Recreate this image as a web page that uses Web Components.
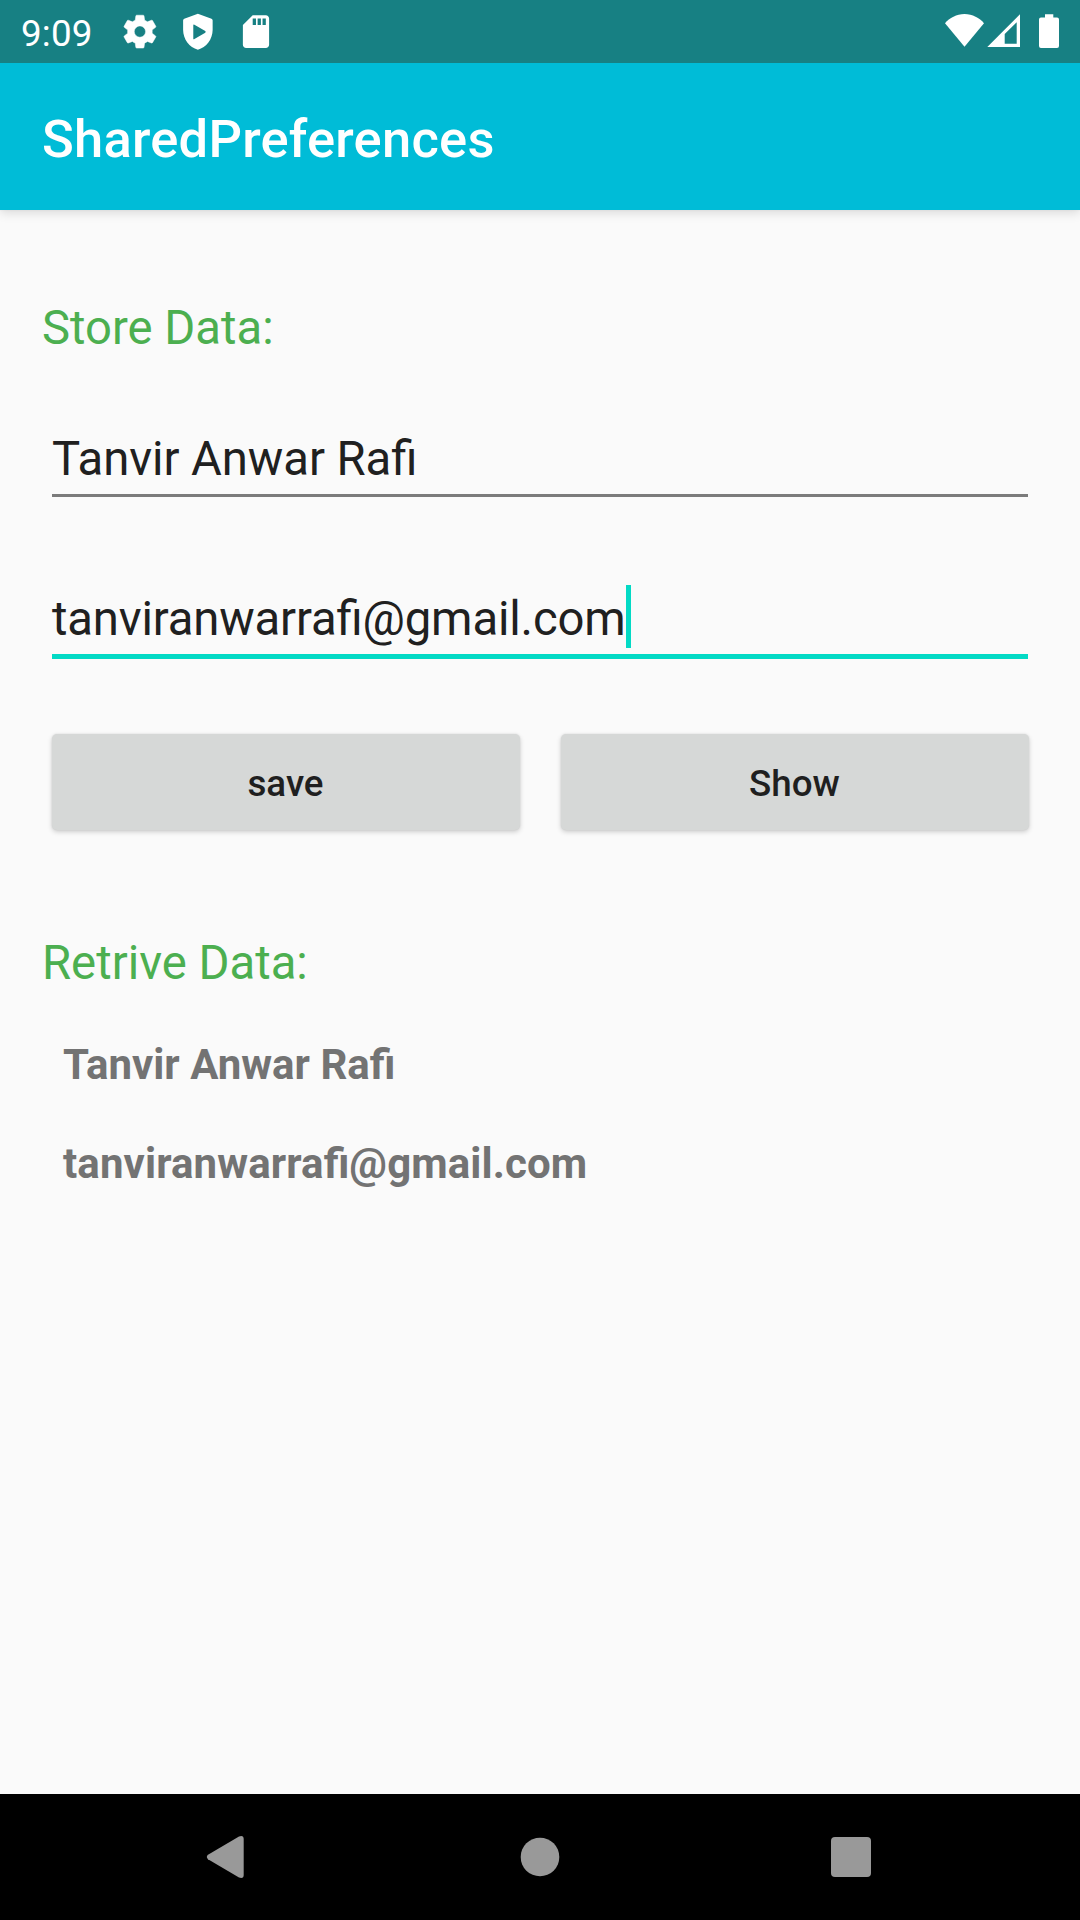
<!DOCTYPE html>
<html lang="en">
<head>
<meta charset="utf-8">
<title>SharedPreferences</title>
<style>
  html, body { margin: 0; padding: 0; }
  body { width: 1080px; height: 1920px; overflow: hidden; font-family: Roboto, sans-serif; background: #fafafa; }
</style>
</head>
<body>
<phone-screen>
  <status-bar slot="status">9:09</status-bar>
  <app-bar slot="bar">SharedPreferences</app-bar>
  <section-label style="margin-top:86px">Store Data:</section-label>
  <edit-text style="margin-top:67px;letter-spacing:-.06px">Tanvir Anwar Rafi</edit-text>
  <edit-text focused style="margin-top:90px;letter-spacing:-.16px">tanviranwarrafi@gmail.com</edit-text>
  <button-row style="margin-top:75px">
    <raised-button>save</raised-button>
    <raised-button>Show</raised-button>
  </button-row>
  <section-label style="margin-top:101px">Retrive Data:</section-label>
  <stored-value style="margin-top:45px">Tanvir Anwar Rafi</stored-value>
  <stored-value style="margin-top:50px;letter-spacing:.11px">tanviranwarrafi@gmail.com</stored-value>
  <nav-bar slot="nav"></nav-bar>
</phone-screen>
<script>
const define = (name, html) => customElements.define(name, class extends HTMLElement {
  constructor() {
    super();
    this.attachShadow({ mode: 'open' }).innerHTML = html;
  }
});

define('phone-screen', `
<style>
  :host { display: flex; flex-direction: column; width: 1080px; height: 1920px; background: #fafafa; }
  main { flex: 1; display: flex; flex-direction: column; min-height: 0; }
</style>
<slot name="status"></slot><slot name="bar"></slot><main><slot></slot></main><slot name="nav"></slot>`);

define('status-bar', `
<style>
  :host { display: flex; align-items: flex-start; height: 63px; z-index: 1; background: #178083; color: #fff; box-sizing: border-box; padding: 0 16px 0 21px; }
  .time { font-size: 36.75px; line-height: 43px; padding-top: 12px; width: 98px; letter-spacing: .2px; white-space: nowrap; }
  svg { display: block; fill: #fff; }
  .left { display: flex; flex: 1; }
</style>
<div class="time"><slot></slot></div>
<div class="left">
  <svg width="180" height="63" viewBox="0 0 180 63">
    <g transform="translate(.4 11.1) scale(1.71)"><path d="M19.14 12.94c.04-.3.06-.61.06-.94 0-.32-.02-.64-.07-.94l2.03-1.58c.18-.14.23-.41.12-.61l-1.92-3.32c-.12-.22-.37-.29-.59-.22l-2.39.96c-.5-.38-1.03-.7-1.62-.94l-.36-2.54c-.04-.24-.24-.41-.48-.41h-3.84c-.24 0-.43.17-.47.41l-.36 2.54c-.59.24-1.13.57-1.62.94l-2.39-.96c-.22-.08-.47 0-.59.22L2.74 8.87c-.12.21-.08.47.12.61l2.03 1.58c-.05.3-.09.63-.09.94s.02.64.07.94l-2.03 1.58c-.18.14-.23.41-.12.61l1.92 3.32c.12.22.37.29.59.22l2.39-.96c.5.38 1.03.7 1.62.94l.36 2.54c.05.24.24.41.48.41h3.84c.24 0 .44-.17.47-.41l.36-2.54c.59-.24 1.13-.56 1.62-.94l2.39.96c.22.08.47 0 .59-.22l1.92-3.32c.12-.22.07-.47-.12-.61l-2.01-1.58zM12 15.3c-1.820 0-3.300-1.480-3.300-3.300s1.480-3.300 3.300-3.300 3.300 1.480 3.300 3.300-1.480 3.300-3.300 3.300z" stroke="#fff" stroke-width=".3"/></g>
    <g transform="translate(59.2 12) scale(1.64)"><path fill-rule="evenodd" d="M12 1 3.7 4.1Q3 4.4 3 5.1V11c0 5.55 3.84 10.74 9 12 5.16-1.26 9-6.45 9-12V5.1Q21 4.4 20.3 4.1zM9.2 8.1v8q0 .8.7.4l6.600-3.900q.5-.5 0-1L9.900 7.800q-.7-.5-.7.3z"/></g>
    <g transform="translate(117.300 12) scale(1.64)"><path d="M18 2h-8L4.02 8 4 20c0 1.1.9 2 2 2h12c1.1 0 2-.9 2-2V4c0-1.1-.9-2-2-2zm-6 6h-2V4h2v4zm3 0h-2V4h2v4zm3 0h-2V4h2v4z"/></g>
  </svg>
</div>
<svg width="124" height="63" viewBox="940 0 124 63">
  <path d="M964.5 46.7 945 23.2C949.5 18 956.5 14 964.5 14S979.500 18 984 23.200Z"/>
  <path fill-rule="evenodd" d="M987.300 47H1020V14.300ZM1004.700 34 1016.700 22.300V43.700H1004.700Z"/>
  <path d="M1045 14.300h8.300v3.200h3.700q2 0 2 2v26.400q0 2-2 2h-16q-2 0-2-2V19.500q0-2 2-2h4z"/>
</svg>`);

define('app-bar', `
<style>
  :host { display: flex; align-items: center; height: 147px; box-sizing: border-box; padding: 5px 42px 0; background: #00bcd7; color: #fff;
    font-size: 52.5px; font-weight: 500; line-height: 62px; letter-spacing: .23px; box-shadow: 0 3px 10px rgba(0,0,0,.13), 0 0 2px rgba(0,0,0,.06); }
</style><slot></slot>`);

define('section-label', `
<style>
  :host { display: block; margin-left: 42px; height: 64px; line-height: 64px; font-size: 47.25px; color: #4caf50; white-space: nowrap; }
</style><slot></slot>`);

define('edit-text', `
<style>
  :host { display: block; margin: 0 52px; height: 70px; box-sizing: border-box; font-size: 47.25px; color: #202020; font-feature-settings: "liga"; }
  .field { display: flex; align-items: flex-start; height: 67px; border-bottom: 3px solid #7b7b7b; line-height: 64px; white-space: nowrap; }
  .caret { display: none; width: 5px; height: 63px; margin-top: -2px; background: #03dac5; }
  :host([focused]) .field { border-bottom: 5px solid #03dac5; }
  :host([focused]) { height: 72px; }
  :host([focused]) .caret { display: block; }
</style>
<div class="field"><span><slot></slot></span><i class="caret"></i></div>`);

define('button-row', `
<style>
  :host { display: flex; gap: 41px; margin: 0 51.5px; height: 96px; }
</style><slot></slot>`);

define('raised-button', `
<style>
  :host { display: flex; flex: 1; align-items: center; justify-content: center; box-sizing: border-box; padding-top: 3px; background: #d6d8d7; color: #1f1f1f;
    border-radius: 5px; font-size: 36.75px; line-height: 43px; font-weight: 500; box-shadow: 0 2px 5px rgba(0,0,0,.18), 0 0 2px rgba(0,0,0,.1); }
</style><slot></slot>`);

define('stored-value', `
<style>
  :host { display: block; margin-left: 63px; height: 49px; line-height: 49px; font-size: 42px; font-weight: 700; color: #737373; white-space: nowrap; font-feature-settings: "liga"; }
</style><slot></slot>`);

define('nav-bar', `
<style>
  :host { display: flex; align-items: center; justify-content: space-between; height: 126px; box-sizing: border-box; padding: 0 209px 0 206px; background: #000; }
  svg { display: block; fill: #999; }
  .home { margin-left: 5px; }
</style>
<svg width="38" height="42" viewBox="0 0 38 42"><path d="M33 .5 2 18.800Q-.4 21 2 23.200L33 41.500Q37.700 43 37.700 39V3Q37.700-1 33 .5Z"/></svg>
<svg class="home" width="40" height="40" viewBox="0 0 40 40"><circle cx="20" cy="20" r="19.300"/></svg>
<svg width="40" height="40" viewBox="0 0 40 40"><rect width="40" height="40" rx="4"/></svg>`);
</script>
</body>
</html>
